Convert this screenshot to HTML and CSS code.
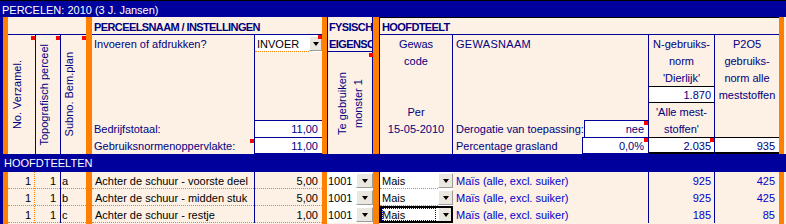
FILE: index.html
```html
<!DOCTYPE html>
<html lang="nl">
<head>
<meta charset="utf-8">
<title>Percelen</title>
<link rel="stylesheet" href="styles.css">
</head>
<body>
<div class="sheet">
  <div class="title">PERCELEN: 2010 (3 J. Jansen)</div>
  <div class="edge"></div>
  <div class="bar b2"></div>
  <div class="bar b6"></div>
  <div class="bar b9"></div>
  <div class="bar b11"></div>
  <div class="bar b16"></div>

  <!-- identification columns -->
  <div class="hd hd-ids"></div>
  <div class="vlabel k3 top note"><span>No. Verzamel.</span></div>
  <div class="vlabel k4 top note"><span>Topografisch perceel</span></div>
  <div class="vlabel k5 top note"><span>Subno. Bem.plan</span></div>

  <!-- perceelsnaam / instellingen -->
  <div class="hd hd-perc">PERCEELSNAAM / INSTELLINGEN</div>
  <div class="stack k7 top">
    <div class="c">Invoeren of afdrukken?</div>
    <div class="c"></div>
    <div class="c"></div>
    <div class="c"></div>
    <div class="c"></div>
    <div class="c">Bedrijfstotaal:</div>
    <div class="c note mark-low">Gebruiksnormenoppervlakte:</div>
  </div>
  <div class="stack k8 top">
    <div class="c dd-cell note">
      <div class="dd"><span class="dd-text">INVOER</span><span class="dd-btn btn-s"></span></div>
    </div>
    <div class="c"></div>
    <div class="c"></div>
    <div class="c"></div>
    <div class="c"></div>
    <div class="c box num">11,00</div>
    <div class="c box box-last num">11,00</div>
  </div>

  <!-- fysische eigenschappen -->
  <div class="fys fys-h">FYSISCH</div>
  <div class="fys fys-sub">EIGENSC</div>
  <div class="fys fys-rot note"><span>Te gebruiken<br>monster 1</span></div>

  <!-- hoofdteelt -->
  <div class="hd hd-hoofd">HOOFDTEELT</div>
  <div class="stack k12 top center">
    <div class="c">Gewas</div>
    <div class="c">code</div>
    <div class="c"></div>
    <div class="c"></div>
    <div class="c">Per</div>
    <div class="c">15-05-2010</div>
    <div class="c"></div>
  </div>
  <div class="stack k13 top">
    <div class="c caps">GEWASNAAM</div>
    <div class="c"></div>
    <div class="c"></div>
    <div class="c"></div>
    <div class="c"></div>
    <div class="c split"><span>Derogatie van toepassing:</span><span class="vbox note">nee</span></div>
    <div class="c split"><span>Percentage grasland</span><span class="vbox vbox-last note">0,0%</span></div>
  </div>
  <div class="stack k14 top center">
    <div class="c">N-gebruiks-</div>
    <div class="c">norm</div>
    <div class="c">'Dierlijk'</div>
    <div class="c wbox num">1.870</div>
    <div class="c">'Alle mest-</div>
    <div class="c">stoffen'</div>
    <div class="c wbox wbox-last num note">2.035</div>
  </div>
  <div class="stack k15 top center">
    <div class="c">P2O5</div>
    <div class="c">gebruiks-</div>
    <div class="c">norm alle</div>
    <div class="c">meststoffen</div>
    <div class="c"></div>
    <div class="c"></div>
    <div class="c wbox wbox-last num">935</div>
  </div>

  <div class="band">HOOFDTEELTEN</div>

  <!-- data rows -->
  <div class="stack k3 body data">
    <div class="c num">1</div>
    <div class="c num">1</div>
    <div class="c num">1</div>
  </div>
  <div class="stack k4 body data">
    <div class="c num">1</div>
    <div class="c num">1</div>
    <div class="c num">1</div>
  </div>
  <div class="stack k5 body data">
    <div class="c">a</div>
    <div class="c">b</div>
    <div class="c">c</div>
  </div>
  <div class="stack k7 body data">
    <div class="c">Achter de schuur - voorste deel</div>
    <div class="c">Achter de schuur - midden stuk</div>
    <div class="c">Achter de schuur - restje</div>
  </div>
  <div class="stack k8 body data">
    <div class="c num">5,00</div>
    <div class="c num">5,00</div>
    <div class="c num">1,00</div>
  </div>
  <div class="stack k10 body">
    <div class="c"><div class="dd"><span class="dd-text">1001</span><span class="dd-btn btn-l"></span></div></div>
    <div class="c"><div class="dd"><span class="dd-text">1001</span><span class="dd-btn btn-l"></span></div></div>
    <div class="c"><div class="dd"><span class="dd-text">1001</span><span class="dd-btn btn-l"></span></div></div>
  </div>
  <div class="stack k12 body">
    <div class="c"><div class="dd"><span class="dd-text dotted">Mais</span><span class="dd-btn btn-m"></span></div></div>
    <div class="c"><div class="dd"><span class="dd-text dotted">Mais</span><span class="dd-btn btn-m"></span></div></div>
    <div class="c"><div class="dd sel"><span class="dd-text">Mais</span><span class="dd-btn btn-m"></span></div></div>
  </div>
  <div class="stack k13 body blue">
    <div class="c">Maïs (alle, excl. suiker)</div>
    <div class="c">Maïs (alle, excl. suiker)</div>
    <div class="c">Maïs (alle, excl. suiker)</div>
  </div>
  <div class="stack k14 body blue">
    <div class="c num">925</div>
    <div class="c num">925</div>
    <div class="c num">185</div>
  </div>
  <div class="stack k15 body blue">
    <div class="c num">425</div>
    <div class="c num">425</div>
    <div class="c num">85</div>
  </div>
</div>
</body>
</html>
```

FILE: styles.css
```css
* { box-sizing: border-box; }

body {
  margin: 0;
  background: #fdf0e4;
  font-family: "Liberation Sans", Arial, sans-serif;
  font-size: 11px;
  color: #000080;
}

.sheet {
  display: grid;
  width: 786px;
  height: 224px;
  overflow: hidden;
  background: #fdf0e4;
  grid-template-columns: 3px 5px 27px 25px 26px 6px 162px 68px 5px 46px 6px 74px 195px 66px 65px 5px 2px;
  grid-template-rows: 17px 18px repeat(7, 17px) 18px repeat(3, 17px) 1fr;
}

.title {
  grid-column: 1 / -1;
  grid-row: 1;
  background: #00009c;
  color: #fff;
  border-top: 1px solid #000;
  line-height: 16px;
  padding: 1px 0 0 2px;
  overflow: hidden;
  white-space: nowrap;
}

.edge { grid-column: 1; grid-row: 2 / -1; background: #00009c; }
.bar { grid-row: 2 / -1; background: #ff8000; }
.b2 { grid-column: 2; }
.b6 { grid-column: 6; }
.b9 { grid-column: 9; }
.b11 { grid-column: 11; }
.b16 { grid-column: 16; }

.band {
  grid-column: 1 / -1;
  grid-row: 10;
  background: #00009c;
  color: #fff;
  line-height: 16px;
  padding: 1px 0 0 4px;
  white-space: nowrap;
}

/* header row */
.hd {
  grid-row: 2;
  border-bottom: 1px solid #000099;
  font-weight: bold;
  letter-spacing: -0.6px;
  line-height: 16px;
  padding: 2px 0 0 2px;
  white-space: nowrap;
  overflow: hidden;
}
.hd-ids { grid-column: 3 / 6; }
.hd-perc { grid-column: 7 / 9; }
.hd-hoofd { grid-column: 12 / 16; border-left: 1px solid #000; border-top: 1px solid #000; padding-top: 1px; }

/* placement */
.k3 { grid-column: 3; }
.k4 { grid-column: 4; }
.k5 { grid-column: 5; }
.k7 { grid-column: 7; }
.k8 { grid-column: 8; }
.k10 { grid-column: 10; }
.k12 { grid-column: 12; }
.k13 { grid-column: 13; }
.k14 { grid-column: 14; }
.k15 { grid-column: 15; }
.top { grid-row: 3 / 10; }
.body { grid-row: 11 / 14; }

/* rotated labels */
.vlabel {
  display: flex;
  align-items: center;
  padding-left: 2px;
}
.vlabel span {
  writing-mode: vertical-rl;
  transform: rotate(180deg);
  line-height: 13px;
  white-space: nowrap;
}
.k4.vlabel, .k5.vlabel { border-left: 1px solid #000099; }
.k3.vlabel { padding-left: 3px; }

/* comment markers */
.note { position: relative; }
.note::after {
  content: "";
  position: absolute;
  top: 0;
  right: 0;
  width: 4px;
  height: 4px;
  background: #ff0000;
}
.vlabel.note::after { top: 1px; }
.mark-low::after { top: 2px; }

/* stacks of 17px rows */
.stack { display: flex; flex-direction: column; min-width: 0; }
.stack > .c {
  height: 17px;
  flex: none;
  line-height: 16px;
  padding: 1px 2px 0 2px;
  white-space: nowrap;
  overflow: hidden;
}
.center > .c { text-align: center; }
.num { text-align: right; }
.stack > .c.num { text-align: right; padding-right: 3px; }
.caps { letter-spacing: 0.3px; }

.k8.top { border-left: 1px solid #000099; }
.k8.top > .dd-cell { padding: 0 4px 0 0; }
.k8.top > .box {
  background: #fff;
  border-top: 1px solid #000099;
  padding: 0 4px 0 0;
  margin-right: 0;
}
.k8.top > .box-last { border-bottom: 1px solid #000099; }

.k12.top { border-left: 1px solid #000; border-right: 1px solid #000099; }
.k13 { border-left: 0; }
.k13.top > .c { padding-left: 3px; }
.split { display: flex; justify-content: space-between; }
.stack > .c.split { padding-right: 0; }
.vbox {
  width: 66px;
  height: 17px;
  margin-top: -1px;
  background: #fff;
  border: 1px solid #000099;
  border-right: 0;
  border-bottom: 0;
  text-align: right;
  padding: 0 4px 0 0;
  line-height: 16px;
}
.vbox-last { border-bottom: 1px solid #000099; }
.k14.top, .k15.top { border-left: 1px solid #000099; }
.stack > .wbox {
  background: #fff;
  border-top: 1px solid #000;
  border-bottom: 1px solid #000;
  padding-top: 0;
}
.stack > .wbox-last { border-bottom: 2px solid #000; }
.k15 > .wbox.num { padding-right: 4px; }

/* fysisch */
.fys {
  grid-column: 10;
  border-left: 1px solid #000099;
  border-right: 1px solid #000099;
  white-space: nowrap;
  overflow: hidden;
}
.fys-h, .fys-sub {
  font-weight: bold;
  letter-spacing: -0.6px;
  line-height: 16px;
  padding: 1px 0 0 1px;
}
.fys-h { grid-row: 2; padding-top: 2px; }
.fys-sub { grid-row: 3; border-bottom: 1px solid #000099; }
.fys-rot {
  grid-row: 4 / 10;
  display: flex;
  align-items: center;
  justify-content: center;
  overflow: visible;
}
.fys-rot::after { top: 1px; right: -1px; }
.fys-rot span {
  writing-mode: vertical-rl;
  transform: rotate(180deg);
  line-height: 16px;
  text-align: center;
  white-space: nowrap;
}

/* data rows */
.data > .c { color: #000; border-bottom: 1px dotted #ff8000; }
.k3.data { border-right: 1px dotted #ff8000; }
.k3.data > .c.num { padding-right: 3px; }
.k4.data > .c.num { padding-right: 4px; }
.k5.data { border-left: 1px solid #000099; }
.k5.data > .c { padding-left: 1px; }
.k7.data > .c { padding-left: 3px; }
.k8.data { border-left: 1px solid #000099; }
.k8.data > .c.num { padding-right: 4px; }
.blue > .c { color: #0000cc; }
.k13.body > .c { padding-left: 3px; }
.k14.body, .k15.body { border-left: 1px solid #000099; }
.k15.body > .c.num { padding-right: 4px; }
.k12.body { border-left: 1px solid #000; }

/* dropdowns */
.stack > .c:has(> .dd) { padding: 0; }
.dd {
  display: flex;
  height: 100%;
  background: #fff;
  color: #000;
}
.dd-text {
  flex: 1;
  min-width: 0;
  line-height: 16px;
  padding: 1px 0 0 2px;
  overflow: hidden;
}
.k10 .dd-text { padding-left: 1px; }
.k8 .dd-text, .dotted { border-bottom: 1px dotted #ff8000; }
.dd-btn {
  flex: none;
  margin: 1px 0;
  background: #e9e7df;
  border-top: 1px solid #fff;
  border-left: 1px solid #fff;
  border-right: 1px solid #9d9b94;
  border-bottom: 1px solid #9d9b94;
  display: flex;
  align-items: center;
  justify-content: center;
}
.dd-btn::before {
  content: "";
  width: 0;
  height: 0;
  border-left: 3px solid transparent;
  border-right: 3px solid transparent;
  border-top: 4px solid #000;
  margin-top: 1px;
}
.btn-s { width: 13px; }
.btn-l { width: 17px; }
.btn-m { width: 15px; }
.sel {
  outline: 2px solid #000;
  outline-offset: -2px;
}
.sel .dd-text {
  outline: 1px dotted #0000cc;
  outline-offset: -3px;
}
```
